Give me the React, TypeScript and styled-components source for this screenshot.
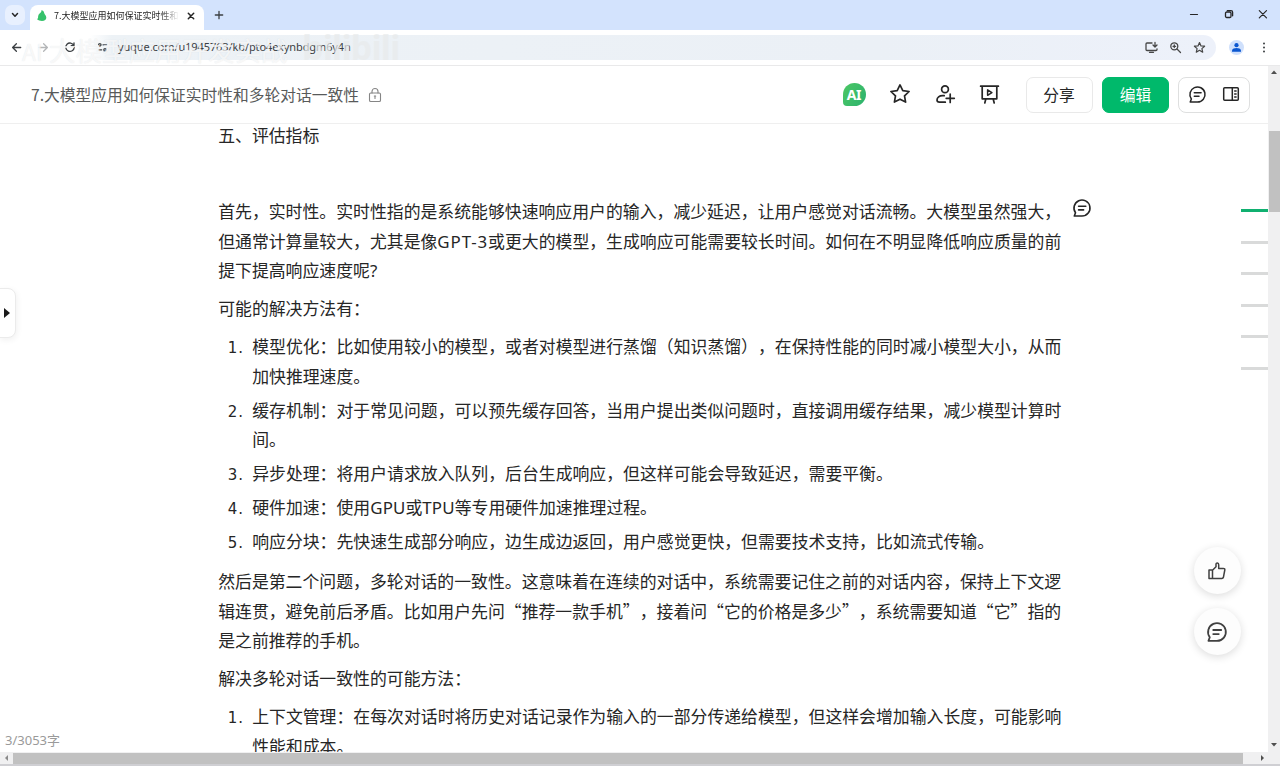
import React from "react";
import styled, { createGlobalStyle } from "styled-components";

const Global = createGlobalStyle`
  * { box-sizing: border-box; }
  html, body { margin: 0; padding: 0; overflow: hidden; }
  body {
    background: #fff;
    color: #262626;
    font-family: "Noto Sans CJK SC", "Noto Sans", sans-serif;
    text-spacing-trim: space-all;
  }
  svg { display: block; flex: none; overflow: visible; }
`;

const Window = styled.div`
  width: 1280px;
  height: 766px;
  display: flex;
  flex-direction: column;
  overflow: hidden;
  position: relative;
  background: #fff;
`;

/* ---------- browser frame ---------- */

const TabStrip = styled.div`
  height: 30px;
  flex: none;
  display: flex;
  align-items: flex-start;
  background: #d3e3fd;
`;

const TabSearch = styled.div`
  width: 20px;
  height: 20px;
  margin: 5px 5px 0 5px;
  border-radius: 7px;
  background: #e8f0fe;
  display: grid;
  place-items: center;
`;

const Tab = styled.div`
  width: 174px;
  height: 25px;
  margin-top: 5px;
  padding: 0 8px 4px 7px;
  border-radius: 8px 8px 0 0;
  background: #fff;
  display: flex;
  align-items: center;
`;

const TabTitle = styled.div`
  width: 125px;
  margin-left: 7px;
  margin-right: 9px;
  overflow: hidden;
  white-space: nowrap;
  font-size: 9px;
  line-height: 16px;
  color: #1f1f1f;
  -webkit-mask-image: linear-gradient(90deg, #000 85%, transparent);
  mask-image: linear-gradient(90deg, #000 85%, transparent);
`;

const NewTab = styled.div`
  margin: 11px 0 0 11px;
`;

const WindowControls = styled.div`
  margin: 10px 13px 0 auto;
  display: flex;
  align-items: center;
  gap: 26.5px;
`;

const Toolbar = styled.div`
  height: 36px;
  flex: none;
  display: flex;
  align-items: center;
  padding: 0 14px 1px 12px;
  background: #fff;
  border-bottom: 1px solid #e9e9ea;
`;

const NavButtons = styled.div`
  display: flex;
  align-items: center;
  gap: 17.7px;
  width: 78px;
`;

const AddressBar = styled.div`
  flex: 1;
  height: 25px;
  border-radius: 0 13px 13px 0;
  background: linear-gradient(90deg, #fff 0, #edf2f6 22px, #ebf0f6 70%, #edf1fa);
  display: flex;
  align-items: center;
  padding: 0 11px 0 8px;
`;

const Url = styled.div`
  margin-left: 11px;
  font: 11px/16px "Noto Sans", "Noto Sans CJK SC", sans-serif;
  letter-spacing: -0.1px;
  color: #3c4043;
  white-space: nowrap;
`;

const AddressActions = styled.div`
  margin-left: auto;
  display: flex;
  align-items: center;
  gap: 12.7px;
`;

const Profile = styled.div`
  width: 15px;
  height: 15px;
  margin: 0 18px 0 13px;
  border-radius: 50%;
  background: #cfe0fc;
  display: grid;
  place-items: center;
`;

const Watermark = styled.div`
  position: absolute;
  left: 22px;
  top: 26px;
  display: flex;
  align-items: flex-start;
  white-space: nowrap;
  pointer-events: none;
`;

const WatermarkText = styled.span`
  width: 280px;
  font-size: 26.5px;
  line-height: 42px;
  padding-top: 3px;
  color: rgba(255, 255, 255, 0.7);
  text-shadow: 0 0 1px rgba(170, 176, 182, 0.3);
`;

const WatermarkPrefix = styled.span`
  display: inline-block;
  width: 27px;
  font-size: 23px;
`;

const WatermarkBrand = styled.span`
  font: 700 34px/42px "Noto Sans", "Noto Sans CJK SC", sans-serif;
  letter-spacing: -0.8px;
  color: rgba(232, 235, 236, 0.72);
`;

/* ---------- page ---------- */

const Middle = styled.div`
  height: 686px;
  flex: none;
  display: flex;
`;

const Page = styled.div`
  width: 1268px;
  position: relative;
  display: flex;
  flex-direction: column;
  overflow: hidden;
`;

const Header = styled.header`
  height: 58px;
  flex: none;
  display: flex;
  align-items: center;
  padding: 0 18px 0 31px;
  border-bottom: 1px solid #efefef;
`;

const DocTitle = styled.h1`
  margin: 0 10px 0 0;
  font-size: 15.75px;
  line-height: 24px;
  font-weight: 400;
  color: #585a5a;
  white-space: nowrap;
`;

const HeaderActions = styled.div`
  margin-left: auto;
  display: flex;
  align-items: center;
`;

const AiBadge = styled.div`
  width: 23px;
  height: 23px;
  margin-bottom: 1px;
  border-radius: 11.5px 11.5px 11.5px 4px;
  background: linear-gradient(120deg, #4cc764, #2cb26e);
  color: #fff;
  font: 700 14px/23px "Noto Sans", "Noto Sans CJK SC", sans-serif;
  letter-spacing: -0.3px;
  text-align: center;
`;

const IconSlot = styled.div<{ $gap: number }>`
  margin-left: ${(p) => p.$gap}px;
  margin-bottom: 1px;
`;

const Button = styled.button<{ $primary?: boolean }>`
  width: 67px;
  height: 36px;
  margin-left: ${(p) => (p.$primary ? 9.5 : 26.5)}px;
  padding: 0 0 1px;
  border: 1px solid ${(p) => (p.$primary ? "#00b96b" : "#e9e9e9")};
  border-radius: 7px;
  background: ${(p) => (p.$primary ? "#00b96b" : "#fff")};
  color: ${(p) => (p.$primary ? "#fff" : "#262626")};
  font-family: inherit;
  font-size: 15.75px;
`;

const ViewSwitch = styled.div`
  width: 72px;
  height: 36px;
  margin-left: 9px;
  padding-bottom: 1px;
  border: 1px solid #dedfdf;
  border-radius: 8px;
  display: flex;
  align-items: center;
  justify-content: center;
  gap: 17px;
`;

const Article = styled.main`
  flex: 1;
  min-height: 0;
  overflow: hidden;
  padding-left: 218.2px;
`;

const Body = styled.div`
  width: 850px;
  margin-top: -4px;
  font-size: 16.88px;
  line-height: 29.5px;
  color: #262626;
`;

const Paragraph = styled.p`
  margin: 0 0 8.5px;
  min-height: 29.5px;
  white-space: pre;
`;

const List = styled.ol`
  margin: 0 0 10.2px;
  padding: 0;
  list-style: none;
  display: flex;
  flex-direction: column;
  gap: 4.6px;
`;

const Item = styled.li`
  display: flex;
  align-items: baseline;
  white-space: pre;
`;

const Marker = styled.span`
  width: 26px;
  margin-right: 8px;
  text-align: right;
  font-family: "DejaVu Sans", "Noto Sans", sans-serif;
  font-size: 15px;
  line-height: 20px;
  letter-spacing: 1.1px;
`;

const Latin = styled.span<{ $track?: number }>`
  font-family: "Noto Sans", "Noto Sans CJK SC", sans-serif;
  line-height: 0;
  letter-spacing: ${(p) => p.$track ?? 0.15}px;
`;

const Outline = styled.nav`
  position: absolute;
  right: 0;
  top: 143px;
  display: flex;
  flex-direction: column;
  gap: 28.6px;
`;

const OutlineBar = styled.div<{ $active?: boolean }>`
  width: 27px;
  height: 3px;
  background: ${(p) => (p.$active ? "#10b070" : "#d9dada")};
`;

const InlineComment = styled.div`
  position: absolute;
  left: 1073px;
  top: 133px;
`;

const Expander = styled.div`
  position: absolute;
  left: -1px;
  top: 222px;
  width: 17px;
  height: 50px;
  border: 1px solid #ebebeb;
  border-radius: 0 8px 8px 0;
  background: #fff;
  box-shadow: 1px 2px 6px rgba(0, 0, 0, 0.06);
  display: flex;
  align-items: center;
  padding-left: 4px;
`;

const Fabs = styled.div`
  position: absolute;
  left: 1193.5px;
  top: 481px;
  display: flex;
  flex-direction: column;
  gap: 14px;
`;

const Fab = styled.div`
  width: 47px;
  height: 47px;
  border-radius: 50%;
  background: #fdfdfd;
  box-shadow: 0 2px 9px rgba(0, 0, 0, 0.14);
  display: grid;
  place-items: center;
`;

const WordCount = styled.div`
  position: absolute;
  left: 5px;
  bottom: 2px;
  font: 13px/20px "Noto Sans", "Noto Sans CJK SC", sans-serif;
  color: #9a9a9a;
`;

const VScroll = styled.div`
  width: 12px;
  background: #f0f0f1;
  display: flex;
  flex-direction: column;
  justify-content: space-between;
  align-items: center;
  padding: 4px 0 5px;
`;

const VThumb = styled.div`
  width: 11px;
  height: 81px;
  margin: 56px 0 auto 1px;
  background: #c1c1c1;
`;

const HScroll = styled.div`
  height: 14px;
  flex: none;
  background: #f0f0f1;
  border-bottom: 2px solid #cfcfd3;
  display: flex;
  align-items: center;
  padding: 0 15px 0 4px;
`;

const HThumb = styled.div`
  width: 1230px;
  height: 11px;
  margin: 0 auto 0 4px;
  background: #c1c1c1;
`;

/* ---------- icons ---------- */

const Stroke = ({
  w,
  h = w,
  box,
  sw = 1.5,
  color = "#262626",
  children,
}: {
  w: number;
  h?: number;
  box?: string;
  sw?: number;
  color?: string;
  children: React.ReactNode;
}) => (
  <svg
    width={w}
    height={h}
    viewBox={box ?? `0 0 ${w} ${h}`}
    fill="none"
    stroke={color}
    strokeWidth={sw}
    strokeLinecap="round"
    strokeLinejoin="round"
  >
    {children}
  </svg>
);

const CommentIcon = ({ size = 18, color = "#262626" }: { size?: number; color?: string }) => (
  <Stroke w={size} box="0 0 18 18" sw={1.6} color={color}>
    <path d="M1.300 17H9a8 8 0 1 0-6.500-3.300z" />
    <path d="M5.600 7.200h7.200M5.600 10.900h5" />
  </Stroke>
);

const Arrow = ({ dir, color = "#505050" }: { dir: "up" | "down" | "left" | "right"; color?: string }) => {
  const d = { up: "M0 4l3-3.5L6 4z", down: "M0 1l3 3.5L6 1z", left: "M4 0L1 3l3 3z", right: "M1 0l3 3-3 3z" }[dir];
  const flat = dir === "up" || dir === "down";
  return (
    <svg width={flat ? 6 : 5} height={flat ? 5 : 6} fill={color}>
      <path d={d} />
    </svg>
  );
};

const Points = ({ items }: { items: React.ReactNode[] }) => (
  <List>
    {items.map((text, i) => (
      <Item key={i}>
        <Marker>{i + 1}.</Marker>
        <span>{text}</span>
      </Item>
    ))}
  </List>
);

export default function App() {
  return (
    <Window>
      <Global />
      <TabStrip>
        <TabSearch>
          <Stroke w={6} h={4} sw={1.5}>
            <path d="M.5.5L3 3.2 5.5.5" />
          </Stroke>
        </TabSearch>
        <Tab>
          <svg width="10" height="11" viewBox="0 0 10 11">
            <path
              d="M4.300.3C6 .5 7 1.400 7.200 3c.2 1.300 2 2.300 2.100 4.400C9.400 9.700 7.600 10.900 5 10.900c-2 0-3.700-.6-4.900-1.700C1.800 8.200.6 6.800 1.500 5 2.400 3.300 4.900 2.700 4.300.3z"
              fill="#36c26b"
            />
          </svg>
          <TabTitle>7.大模型应用如何保证实时性和多轮</TabTitle>
          <Stroke w={6} sw={1.5}>
            <path d="M.3.3l5.400 5.400M5.700.3L.3 5.700" />
          </Stroke>
        </Tab>
        <NewTab>
          <Stroke w={8} sw={1.3} color="#3c4043">
            <path d="M4 .3v7.400M.3 4h7.400" />
          </Stroke>
        </NewTab>
        <WindowControls>
          <Stroke w={8} sw={1.2}>
            <path d="M.5 4.500h7" />
          </Stroke>
          <Stroke w={8} sw={1.3}>
            <rect x="0.5" y="2" width="5.5" height="5.5" rx="1.2" />
            <path d="M2.300.6h3.700a1.600 1.600 0 0 1 1.600 1.600v3.600" />
          </Stroke>
          <Stroke w={8} sw={1.2}>
            <path d="M.3.600l7.200 7.200M7.500.600L.3 7.800" />
          </Stroke>
        </WindowControls>
      </TabStrip>

      <Toolbar>
        <NavButtons>
          <Stroke w={9} sw={1.3} color="#3c4043">
            <path d="M8.700 4.500H.6M4.400.7L.6 4.500l3.800 3.800" />
          </Stroke>
          <Stroke w={9} sw={1.3} color="#b4b6b8">
            <path d="M.3 4.500h8.100M4.600.7l3.800 3.800-3.800 3.800" />
          </Stroke>
          <Stroke w={10} sw={1.3} color="#3c4043">
            <path d="M8.800 3.400A4.200 4.200 0 1 0 9.200 5.400M9 .8v2.800H6.200" />
          </Stroke>
        </NavButtons>
        <AddressBar>
          <Stroke w={9} sw={1.3} color="#44484b">
            <circle cx="1.8" cy="1.8" r="1.2" />
            <path d="M5 1.800h3.700M.5 6.800h3.200" />
            <circle cx="7" cy="6.8" r="1.2" />
          </Stroke>
          <Url>yuque.com/u1945763/kb/pto4exynbdgm6y4n</Url>
          <AddressActions>
            <Stroke w={13} h={11} sw={1.3} color="#474747">
              <path d="M7 1H2a1 1 0 0 0-1 1v5.500a1 1 0 0 0 1 1h9a1 1 0 0 0 1-1V6.800M4.500 10.300h4M10 .5v4.300M8 3l2 2 2-2" />
            </Stroke>
            <Stroke w={11} sw={1.3} color="#474747">
              <circle cx="4.3" cy="4.3" r="3.5" />
              <path d="M7 7l3.500 3.500M4.300 3v2.600M3 4.300h2.600" />
            </Stroke>
            <Stroke w={11} sw={1.2} color="#474747">
              <path d="M5.500.5l1.500 3.400 3.600.3-2.700 2.400.8 3.600-3.200-1.900-3.200 1.900.8-3.600L.4 4.200 4 3.900z" />
            </Stroke>
          </AddressActions>
        </AddressBar>
        <Profile>
          <svg width="9" height="9" fill="#0b57d0">
            <circle cx="4.5" cy="2.2" r="2.1" />
            <path d="M0 8.800V7.500C.3 5.800 2.500 5.100 4.500 5.100S8.700 5.800 9 7.500v1.300z" />
          </svg>
        </Profile>
        <svg width="4" height="11" fill="#3c4043">
          <circle cx="2" cy="1.4" r="1" />
          <circle cx="2" cy="5.5" r="1" />
          <circle cx="2" cy="9.6" r="1" />
        </svg>
      </Toolbar>

      <Watermark>
        <WatermarkText>
          <WatermarkPrefix>AI</WatermarkPrefix>大模型应用开发实战
        </WatermarkText>
        <WatermarkBrand>bilibili</WatermarkBrand>
      </Watermark>

      <Middle>
        <Page>
          <Header>
            <DocTitle>7.大模型应用如何保证实时性和多轮对话一致性</DocTitle>
            <Stroke w={12} h={14} sw={1.1} color="#858585">
              <rect x="0.5" y="5" width="11" height="8.5" rx="1.3" />
              <path d="M3 5V3.500a3 3 0 0 1 6 0V5M6 8v2.500M5.300 8h1.400" />
            </Stroke>
            <HeaderActions>
              <AiBadge>AI</AiBadge>
              <IconSlot $gap={24}>
                <Stroke w={20} sw={1.7}>
                  <path d="M10 .9l2.800 5.700 6.300.9-4.600 4.400 1.100 6.200L10 15.200l-5.600 2.900 1.100-6.200L.9 7.500l6.300-.9z" />
                </Stroke>
              </IconSlot>
              <IconSlot $gap={26}>
                <Stroke w={19} h={18} sw={1.7}>
                  <circle cx="9" cy="4.3" r="3.4" />
                  <path d="M8.200 10.700H6.500C3.500 10.700 1 12.600 1 15c0 1.500 1 2.200 2.500 2.200h5.800M14.200 9.200v8.200M10.200 13.300h8.100" />
                </Stroke>
              </IconSlot>
              <IconSlot $gap={25.5}>
                <Stroke w={19} h={19} sw={1.7}>
                  <path d="M.6 1.200h17.800M2.200 1.200v12.600h14.600V1.200M5.800 14l-1 4M13.200 14l1 4" />
                  <path d="M7.600 4.900v5.400l4.300-2.700z" strokeWidth="1.5" />
                </Stroke>
              </IconSlot>
              <Button>分享</Button>
              <Button $primary>编辑</Button>
              <ViewSwitch>
                <CommentIcon size={17} />
                <Stroke w={16} h={14} sw={1.5}>
                  <rect x="0.7" y="0.7" width="14.6" height="12.6" rx="1" />
                  <path d="M9.300.7v12.600M11.700 4h1.400M11.700 7h1.400M11.700 10h1.400" />
                </Stroke>
              </ViewSwitch>
            </HeaderActions>
          </Header>

          <Article>
            <Body>
              <Paragraph>五、评估指标</Paragraph>
              <Paragraph />
              <Paragraph>
                {"首先，实时性。实时性指的是系统能够快速响应用户的输入，减少延迟，让用户感觉对话流畅。大模型虽然强大，\n但通常计算量较大，尤其是像"}
                <Latin $track={0.9}>GPT-3</Latin>
                {"或更大的模型，生成响应可能需要较长时间。如何在不明显降低响应质量的前\n提下提高响应速度呢"}
                <Latin>?</Latin>
              </Paragraph>
              <Paragraph>可能的解决方法有：</Paragraph>
              <Points
                items={[
                  "模型优化：比如使用较小的模型，或者对模型进行蒸馏（知识蒸馏），在保持性能的同时减小模型大小，从而\n加快推理速度。",
                  "缓存机制：对于常见问题，可以预先缓存回答，当用户提出类似问题时，直接调用缓存结果，减少模型计算时\n间。",
                  "异步处理：将用户请求放入队列，后台生成响应，但这样可能会导致延迟，需要平衡。",
                  <>
                    硬件加速：使用<Latin>GPU</Latin>或<Latin>TPU</Latin>等专用硬件加速推理过程。
                  </>,
                  "响应分块：先快速生成部分响应，边生成边返回，用户感觉更快，但需要技术支持，比如流式传输。",
                ]}
              />
              <Paragraph>
                {"然后是第二个问题，多轮对话的一致性。这意味着在连续的对话中，系统需要记住之前的对话内容，保持上下文逻\n辑连贯，避免前后矛盾。比如用户先问“推荐一款手机”，接着问“它的价格是多少”，系统需要知道“它”指的\n是之前推荐的手机。"}
              </Paragraph>
              <Paragraph>解决多轮对话一致性的可能方法：</Paragraph>
              <Points
                items={[
                  "上下文管理：在每次对话时将历史对话记录作为输入的一部分传递给模型，但这样会增加输入长度，可能影响\n性能和成本。",
                ]}
              />
            </Body>
          </Article>

          <InlineComment>
            <CommentIcon />
          </InlineComment>
          <Outline>
            {[true, false, false, false, false, false].map((active, i) => (
              <OutlineBar key={i} $active={active} />
            ))}
          </Outline>
          <Expander>
            <svg width="6" height="10" fill="#1a1a1a">
              <path d="M0 0l6 5-6 5z" />
            </svg>
          </Expander>
          <Fabs>
            <Fab>
              <Stroke w={18} sw={1.5} color="#404040">
                <path d="M1 8h3.500v8.500H1zM4.500 8.200L8 4.800V2.300C8 .3 10.700.4 10.700 2.700V6.400h4.700c1 0 1.600.7 1.400 1.600l-1.400 7.300c-.2.800-.8 1.200-1.500 1.200H4.500" />
              </Stroke>
            </Fab>
            <Fab>
              <CommentIcon size={20} color="#404040" />
            </Fab>
          </Fabs>
          <WordCount>3/3053字</WordCount>
        </Page>
        <VScroll>
          <Arrow dir="up" />
          <VThumb />
          <Arrow dir="down" />
        </VScroll>
      </Middle>
      <HScroll>
        <Arrow dir="left" color="#8a8a8a" />
        <HThumb />
        <Arrow dir="right" />
      </HScroll>
    </Window>
  );
}
